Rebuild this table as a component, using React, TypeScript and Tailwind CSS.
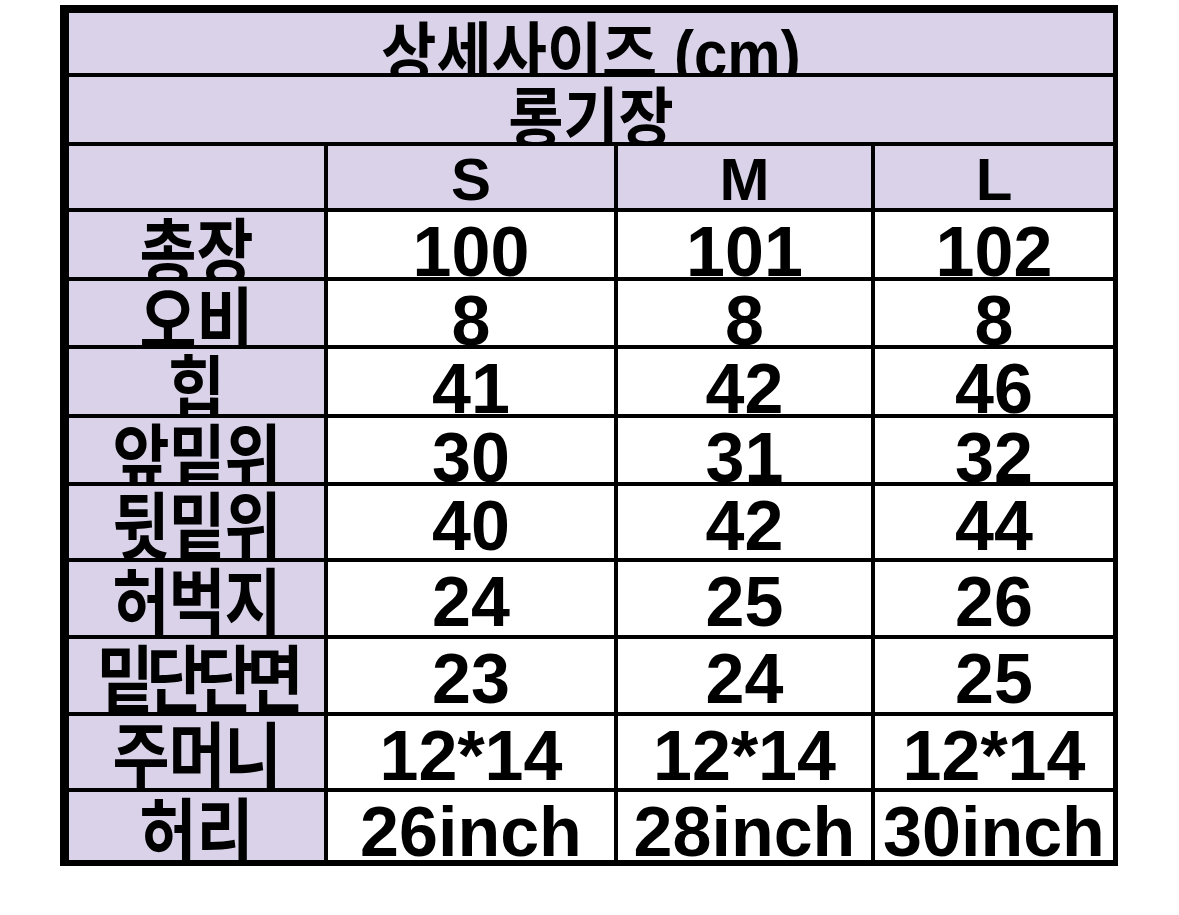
const FONT = "font-['Liberation_Sans','Noto_Sans_CJK_KR',sans-serif]";

type Row = { label: string; h: string; values: [string, string, string] };

const rows: Row[] = [
  { label: "총장", h: "h-[65px]", values: ["100", "101", "102"] },
  { label: "오비", h: "h-[64px]", values: ["8", "8", "8"] },
  { label: "힙", h: "h-[65px]", values: ["41", "42", "46"] },
  { label: "앞밑위", h: "h-[64px]", values: ["30", "31", "32"] },
  { label: "뒷밑위", h: "h-[72px]", values: ["40", "42", "44"] },
  { label: "허벅지", h: "h-[73px]", values: ["24", "25", "26"] },
  { label: "밑단단면", h: "h-[73px]", values: ["23", "24", "25"] },
  { label: "주머니", h: "h-[72px]", values: ["12*14", "12*14", "12*14"] },
  { label: "허리", h: "h-[68px]", values: ["26inch", "28inch", "30inch"] },
];

function labelTracking(label: string) {
  if (label.length >= 4) return "tracking-[-7px]";
  if (label.length === 3) return "tracking-[-1px]";
  return "tracking-normal";
}

function Cell({ children, purple, className = "" }: { children: React.ReactNode; purple?: boolean; className?: string }) {
  return (
    <div className={`flex justify-center items-start overflow-hidden ${purple ? "bg-[#d9d2e9]" : "bg-white"} ${className}`}>
      {children}
    </div>
  );
}

export default function App() {
  return (
    <div className={`min-h-screen bg-white pl-[60px] pt-[5px] text-black ${FONT}`}>
      <div className="w-[1058px] border-t-[8px] border-l-[9px] border-r-[5px] border-b-[6px] border-black bg-black">
        <div className="grid grid-cols-[255px_286px_253px_238px] gap-[4px]">
          <Cell purple className="col-span-4 h-[60px]">
            <span className="pt-[8px] text-[60px] font-bold leading-none whitespace-nowrap origin-top scale-y-[1.1]">상세사이즈 (cm)</span>
          </Cell>
          <Cell purple className="col-span-4 h-[65px]">
            <span className="pt-[9px] text-[60px] font-bold leading-none whitespace-nowrap origin-top scale-y-[1.1]">롱기장</span>
          </Cell>

          <Cell purple className="h-[62px]">{null}</Cell>
          {["S", "M", "L"].map((s) => (
            <Cell key={s} purple className="h-[62px]">
              <span className="pt-[4px] text-[60px] font-bold leading-none">{s}</span>
            </Cell>
          ))}

          {rows.map((r) => (
            <div key={r.label} className="contents">
              <Cell purple className={r.h}>
                <span className={`pt-[5px] text-[62px] font-bold leading-none whitespace-nowrap origin-top scale-y-[1.18] ${labelTracking(r.label)}`}>
                  {r.label}
                </span>
              </Cell>
              {r.values.map((v, i) => (
                <Cell key={i} className={r.h}>
                  <span className="pt-[5px] text-[70px] font-bold leading-none whitespace-nowrap">{v}</span>
                </Cell>
              ))}
            </div>
          ))}
        </div>
      </div>
    </div>
  );
}
